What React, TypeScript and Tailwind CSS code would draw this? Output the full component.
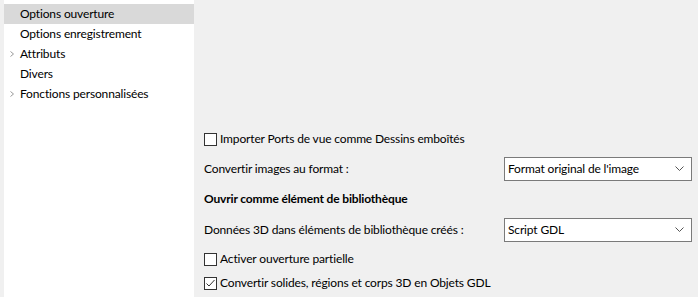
import React from "react";

const Chevron = () => (
  <svg width="6" height="8" viewBox="0 0 6 8" className="absolute left-[5px] top-[6px]">
    <path d="M1.5 1.5 L4.5 4 L1.5 6.5" fill="none" stroke="#9a9a9a" strokeWidth="1" />
  </svg>
);

const Tree = () => {
  const items = [
    { t: "Options ouverture", sel: true, arrow: false },
    { t: "Options enregistrement", sel: false, arrow: false },
    { t: "Attributs", sel: false, arrow: true },
    { t: "Divers", sel: false, arrow: false },
    { t: "Fonctions personnalisées", sel: false, arrow: true },
  ];
  return (
    <div className="w-[190px] h-full bg-white pt-[4px]">
      {items.map((it) => (
        <div
          key={it.t}
          className={`relative h-[20px] pl-[16px] flex items-center leading-none ${it.sel ? "bg-[#d9d9d9]" : ""}`}
        >
          {it.arrow && <Chevron />}
          <span>{it.t}</span>
        </div>
      ))}
    </div>
  );
};

const Check = ({ checked }: { checked?: boolean }) => (
  <div className="w-[13px] h-[13px] border border-[#333333] bg-white flex items-center justify-center shrink-0">
    {checked && (
      <svg width="11" height="11" viewBox="0 0 11 11">
        <path d="M1.5 5.5 L4 8 L9.5 2" fill="none" stroke="#333333" strokeWidth="1" />
      </svg>
    )}
  </div>
);

const Select = ({ value }: { value: string }) => (
  <div className="w-[188px] h-[24px] border border-[#7a7a7a] bg-white flex items-center pl-[3px] pr-[7px]">
    <span className="flex-1">{value}</span>
    <svg width="9" height="6" viewBox="0 0 9 6">
      <path d="M0.5 0.5 L4.5 4.5 L8.5 0.5" fill="none" stroke="#555555" strokeWidth="1" />
    </svg>
  </div>
);

export default function App() {
  return (
    <div
      className="w-[698px] h-[297px] bg-[#f0f0f0] flex text-[12px] tracking-[-0.15px] text-black overflow-hidden"
      style={{ fontFamily: 'Lato, "Noto Sans", sans-serif' }}
    >
      <div className="pl-[4px] h-full">
        <Tree />
      </div>
      <div className="flex-1 pl-[10px] pr-[6px] pt-[132px] flex flex-col">
        <div className="flex items-center gap-[3px] h-[14px]">
          <Check />
          <span>Importer Ports de vue comme Dessins emboîtés</span>
        </div>
        <div className="flex items-center justify-between mt-[11px] h-[24px]">
          <span>Convertir images au format :</span>
          <Select value="Format original de l'image" />
        </div>
        <div className="mt-[10px] h-[16px] flex items-center font-bold">Ouvrir comme élément de bibliothèque</div>
        <div className="flex items-center justify-between mt-[11px] h-[24px]">
          <span>Données 3D dans éléments de bibliothèque créés :</span>
          <Select value="Script GDL" />
        </div>
        <div className="flex items-center gap-[3px] mt-[10px] h-[14px]">
          <Check />
          <span>Activer ouverture partielle</span>
        </div>
        <div className="flex items-center gap-[3px] mt-[10px] h-[14px]">
          <Check checked />
          <span>Convertir solides, régions et corps 3D en Objets GDL</span>
        </div>
      </div>
    </div>
  );
}
